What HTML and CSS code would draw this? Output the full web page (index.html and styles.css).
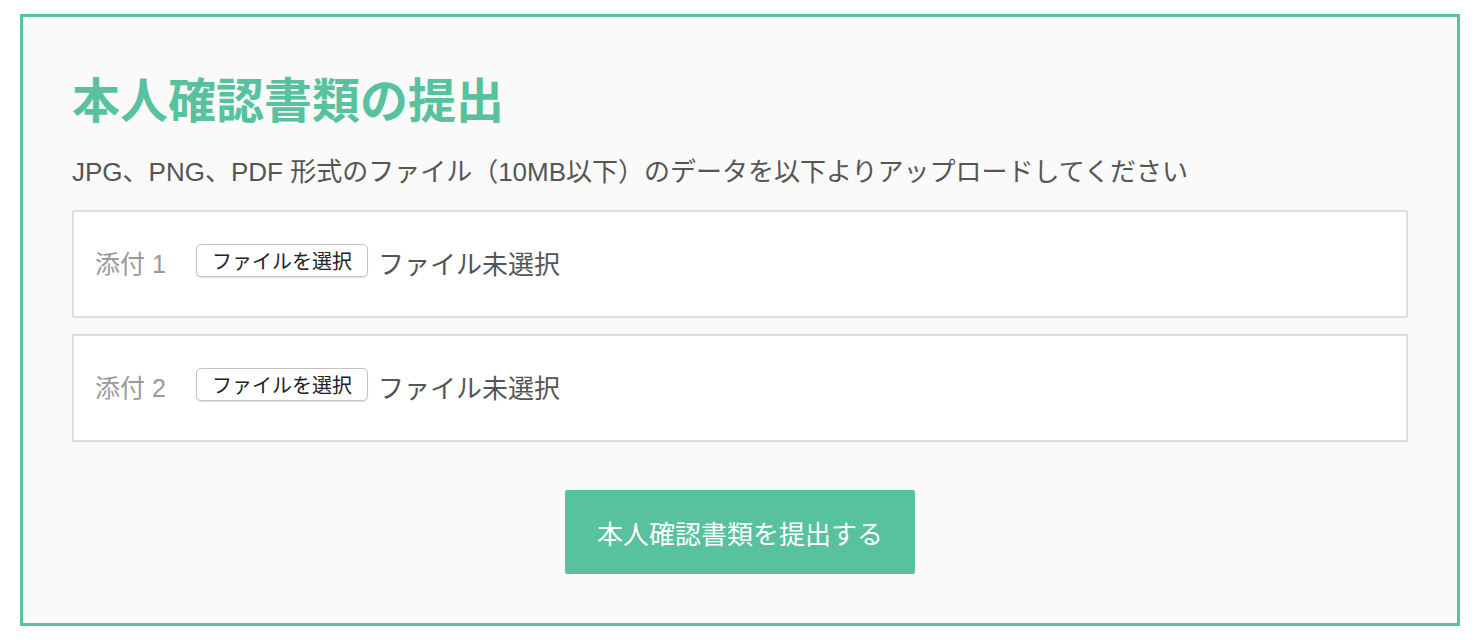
FILE: index.html
```html
<!DOCTYPE html>
<html lang="ja">
<head>
    <meta charset="UTF-8">
    <meta name="viewport" content="width=device-width, initial-scale=1.0">
    <title>本人確認書類の提出</title>
    <link rel="stylesheet" href="styles.css">
</head>
<body>
    <div class="frame">
        <h1 class="title">本人確認書類の提出</h1>
        <p class="lead">JPG、PNG、PDF 形式のファイル（10MB以下）のデータを以下よりアップロードしてください</p>

        <div class="attach">
            <span class="attach-label">添付 1</span>
            <label class="file-btn">ファイルを選択<input type="file" class="file-input"></label>
            <span class="file-name">ファイル未選択</span>
        </div>

        <div class="attach">
            <span class="attach-label">添付 2</span>
            <label class="file-btn">ファイルを選択<input type="file" class="file-input"></label>
            <span class="file-name">ファイル未選択</span>
        </div>

        <div class="actions">
            <button class="submit">本人確認書類を提出する</button>
        </div>
    </div>
</body>
</html>
```

FILE: styles.css
```css
body {
    margin: 0;
    font-family: "Liberation Sans", "Noto Sans CJK JP", sans-serif;
    color: #555;
    background-color: #fff;
}
.frame {
    box-sizing: border-box;
    width: 1440px;
    height: 612px;
    margin: 14px 0 0 20px;
    padding: 56px 49px 0;
    border: 3px solid #58c19d;
    background-color: #fafafa;
}
.title {
    margin: 0;
    font-family: "Noto Sans CJK JP", sans-serif;
    font-size: 48px;
    line-height: 48px;
    font-weight: bold;
    color: #58c19d;
}
.lead {
    margin: 38px 0 0;
    font-size: 26px;
    line-height: 26px;
    color: #555;
}
.attach {
    box-sizing: border-box;
    display: flex;
    align-items: center;
    height: 108px;
    margin-top: 25px;
    padding: 0 0 4px 21px;
    border: 2px solid #dedede;
    background-color: #fff;
}
.attach + .attach {
    margin-top: 16px;
}
.attach-label {
    width: 101px;
    font-size: 25px;
    color: #999;
}
.file-btn {
    box-sizing: border-box;
    display: inline-flex;
    align-items: center;
    justify-content: center;
    width: 172px;
    height: 33px;
    margin-top: -4px;
    border: 1px solid #c4c4c4;
    border-radius: 5px;
    background-color: #fff;
    box-shadow: 0 1px 1px rgba(0, 0, 0, 0.12);
    font-family: "Noto Sans CJK JP", sans-serif;
    font-size: 20px;
    color: #222;
    cursor: pointer;
}
.file-input {
    display: none;
}
.file-name {
    margin-left: 10px;
    font-family: "Noto Sans CJK JP", sans-serif;
    font-size: 26px;
    color: #555;
}
.actions {
    display: flex;
    justify-content: center;
    margin-top: 48px;
}
.submit {
    width: 350px;
    height: 84px;
    border: none;
    border-radius: 2px;
    background-color: #58c19d;
    color: #fff;
    font-family: "Noto Sans CJK JP", sans-serif;
    font-size: 26px;
    cursor: pointer;
}
```
